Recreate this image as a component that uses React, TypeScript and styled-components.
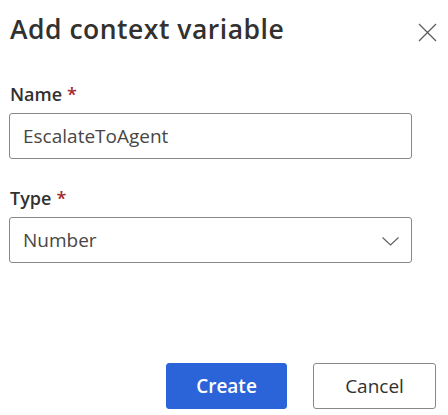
import React from "react";
import styled, { createGlobalStyle } from "styled-components";

const Global = createGlobalStyle`
  html, body { margin: 0; padding: 0; background: #ffffff; }
  body { font-family: "Open Sans", "Noto Sans", sans-serif; color: #323130; }
  * { box-sizing: border-box; }
`;

const Dialog = styled.div`
  width: 448px;
  height: 415px;
  padding: 9px 12px 0 9px;
  display: flex;
  flex-direction: column;
`;

const Header = styled.div`
  display: flex;
  align-items: center;
  justify-content: space-between;
  height: 40px;
`;

const Title = styled.h1`
  margin: 0 0 0 1px;
  font-size: 26.5px;
  font-weight: 600;
  letter-spacing: 0.5px;
  line-height: 40px;
  color: #323130;
`;

const CloseButton = styled.button`
  width: 24px;
  height: 24px;
  padding: 0;
  border: none;
  background: transparent;
  display: flex;
  align-items: center;
  justify-content: center;
  margin-right: -3px;
  margin-top: 6px;
`;

const Form = styled.div`
  display: flex;
  flex-direction: column;
  width: 403px;
  margin-top: 34px;
`;

const Field = styled.div<{ $gap?: number }>`
  display: flex;
  flex-direction: column;
  margin-top: ${(p) => p.$gap ?? 0}px;
`;

const Label = styled.label`
  font-size: 18px;
  font-weight: 600;
  line-height: 22px;
  color: #323130;
  margin-left: 1px;
  margin-bottom: 8px;
`;

const Required = styled.span`
  color: #a4262c;
  margin-left: 5px;
`;

const Box = styled.div`
  height: 46px;
  border: 1px solid #8a8886;
  border-radius: 3px;
  display: flex;
  align-items: center;
  justify-content: space-between;
  padding: 0 12px 0 13px;
  font-size: 19px;
  color: #484644;
`;

const Chevron = styled.svg`
  margin-top: 2px;
`;

const Footer = styled.div`
  margin-top: auto;
  margin-bottom: 6px;
  display: flex;
  justify-content: flex-end;
  gap: 26px;
`;

const Button = styled.button<{ $primary?: boolean }>`
  height: 46px;
  width: ${(p) => (p.$primary ? 121 : 123)}px;
  border-radius: 3px;
  font-family: "Open Sans", "Noto Sans", sans-serif;
  font-size: 19px;
  font-weight: ${(p) => (p.$primary ? 600 : 500)};
  border: 1px solid ${(p) => (p.$primary ? "#2b63d9" : "#8a8886")};
  background: ${(p) => (p.$primary ? "#2b63d9" : "#ffffff")};
  color: ${(p) => (p.$primary ? "#ffffff" : "#323130")};
`;

export default function App() {
  return (
    <>
      <Global />
      <Dialog>
        <Header>
          <Title>Add context variable</Title>
          <CloseButton aria-label="Close">
            <svg width="19" height="19" viewBox="0 0 19 19">
              <path d="M1 1 L18 18 M18 1 L1 18" stroke="#605e5c" strokeWidth="1.3" fill="none" />
            </svg>
          </CloseButton>
        </Header>
        <Form>
          <Field>
            <Label>
              Name<Required>*</Required>
            </Label>
            <Box>EscalateToAgent</Box>
          </Field>
          <Field $gap={28}>
            <Label>
              Type<Required>*</Required>
            </Label>
            <Box>
              Number
              <Chevron width="17" height="9" viewBox="0 0 17 9">
                <path d="M0.5 0.5 L8.5 8 L16.5 0.5" stroke="#605e5c" strokeWidth="1.1" fill="none" />
              </Chevron>
            </Box>
          </Field>
        </Form>
        <Footer>
          <Button $primary>Create</Button>
          <Button>Cancel</Button>
        </Footer>
      </Dialog>
    </>
  );
}
